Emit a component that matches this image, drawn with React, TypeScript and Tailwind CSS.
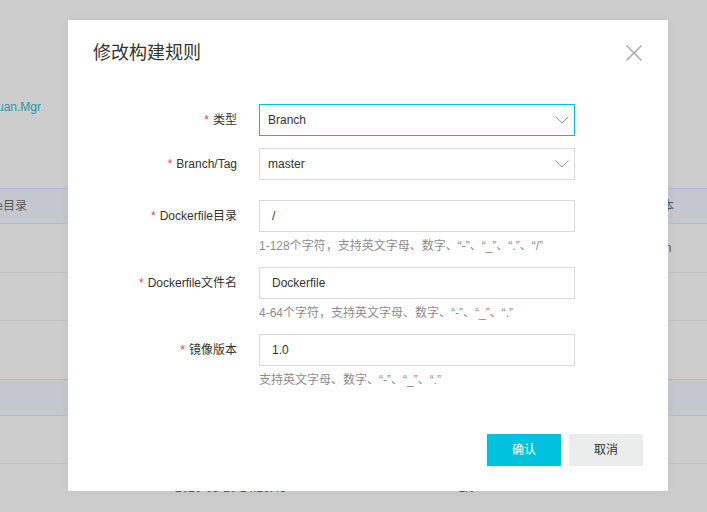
import type { ReactNode } from "react";

const FONT = "font-['Liberation_Sans','Noto_Sans_CJK_SC',sans-serif]";

// Down-pointing chevron used inside the select boxes
function Chevron() {
  return (
    <svg width="14" height="8" viewBox="0 0 14 8" fill="none" className="shrink-0">
      <polyline points="0.5,0.5 7,7 13.5,0.5" stroke="#9a9a9a" strokeWidth="1" />
    </svg>
  );
}

function CloseIcon() {
  return (
    <svg width="16" height="16" viewBox="0 0 16 16" fill="none">
      <path d="M0.5 0.5 L15.5 15.5 M15.5 0.5 L0.5 15.5" stroke="#a0a0a0" strokeWidth="1.3" />
    </svg>
  );
}

function Field({ label, hint, className = "", children }: { label: string; hint?: string; className?: string; children: ReactNode }) {
  return (
    <div className={`flex ${className}`}>
      <div className="flex h-8 w-[144px] shrink-0 items-center justify-end text-[12px] text-[#333]">
        <span className="mr-[4px] text-[#e5414b]">*</span>
        {label}
      </div>
      <div className="ml-[22px] w-[316px]">
        {children}
        {hint && <p className="mt-[6px] text-[12px] leading-[16px] text-[#8c8c8c]">{hint}</p>}
      </div>
    </div>
  );
}

function Select({ value, active }: { value: string; active?: boolean }) {
  return (
    <div
      className={`flex h-8 items-center justify-between border pl-2 pr-[5px] text-[12px] text-[#333] ${
        active ? "border-[#00c1de]" : "border-[#d9d9d9]"
      }`}
    >
      <span>{value}</span>
      <Chevron />
    </div>
  );
}

function Input({ value }: { value: string }) {
  return <div className="flex h-8 items-center border border-[#d9d9d9] pl-3 text-[12px] text-[#333]">{value}</div>;
}

// Dimmed page behind the dialog
function Backdrop() {
  return (
    <div className="flex h-full flex-col text-[12px] text-[#5a5a5a]">
      <div className="h-[188px] pt-[95px]">
        <div className="flex w-[41px] justify-end overflow-hidden whitespace-nowrap leading-[24px] text-[#2497a8]">
          xiaoyuan.Mgr
        </div>
      </div>
      <div className="flex h-[37px] items-center border-y border-[#a9bcd3] bg-[#c4c7ce]">
        <div className="flex w-[27px] justify-end overflow-hidden whitespace-nowrap">Dockerfile目录</div>
        <div className="ml-[599px]">镜像版本</div>
      </div>
      <div className="flex h-[49px] items-center border-b border-[#c2c2c2]">
        <div className="ml-[642px]">origin</div>
      </div>
      <div className="h-[48px] border-b border-[#c2c2c2]" />
      <div className="h-[58px]" />
      <div className="h-[38px] border-y border-[#a9bcd3] bg-[#c4c7ce]" />
      <div className="h-[48px] border-b border-[#c2c2c2]" />
      <div className="flex h-[48px] items-center">
        <div className="ml-[175px]">2020-03-10 14:26:45</div>
        <div className="ml-[172px]">1.0</div>
      </div>
    </div>
  );
}

export default function App() {
  return (
    <div className={`relative h-[512px] w-[707px] overflow-hidden bg-[#cdcdcd] ${FONT}`}>
      <Backdrop />

      {/* Edit build rule dialog */}
      <div className="absolute left-[68px] top-[20px] flex h-[471px] w-[600px] flex-col bg-white px-[25px] pb-[25px] pt-[21px] shadow-[0_0_8px_rgba(0,0,0,0.06)]">
        <h2 className="text-[18px] leading-[24px] text-[#333]">修改构建规则</h2>
        <button className="absolute right-[26px] top-[25px]">
          <CloseIcon />
        </button>

        <div className="mt-[39px] flex flex-col">
          <Field label="类型" className="mb-3">
            <Select value="Branch" active />
          </Field>
          <Field label="Branch/Tag" className="mb-5">
            <Select value="master" />
          </Field>
          <Field label="Dockerfile目录" hint="1-128个字符，支持英文字母、数字、“-”、“_”、“.”、“/”" className="mb-[13px]">
            <Input value="/" />
          </Field>
          <Field label="Dockerfile文件名" hint="4-64个字符，支持英文字母、数字、“-”、“_”、“.”" className="mb-[13px]">
            <Input value="Dockerfile" />
          </Field>
          <Field label="镜像版本" hint="支持英文字母、数字、“-”、“_”、“.”">
            <Input value="1.0" />
          </Field>
        </div>

        <div className="mt-auto flex justify-end gap-2">
          <button className="h-8 w-[74px] bg-[#00c1de] text-[12px] text-white">确认</button>
          <button className="h-8 w-[74px] bg-[#ebecec] text-[12px] text-[#333]">取消</button>
        </div>
      </div>
    </div>
  );
}
